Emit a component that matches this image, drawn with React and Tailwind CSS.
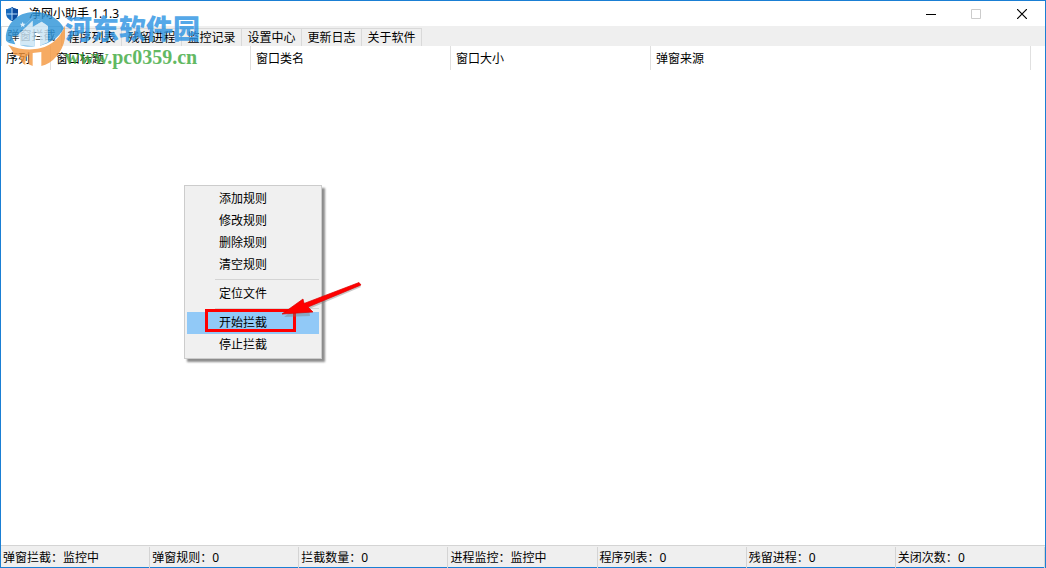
import React, { useState } from 'react';

const tabs = ['弹窗拦截', '程序列表', '残留进程', '监控记录', '设置中心', '更新日志', '关于软件'];

const menuGroups = [
  ['添加规则', '修改规则', '删除规则', '清空规则'],
  ['定位文件'],
  ['开始拦截', '停止拦截'],
];

const statusItems = [
  { label: '弹窗拦截', value: '监控中' },
  { label: '弹窗规则', value: '0' },
  { label: '拦截数量', value: '0' },
  { label: '进程监控', value: '监控中' },
  { label: '程序列表', value: '0' },
  { label: '残留进程', value: '0' },
  { label: '关闭次数', value: '0' },
];

const ShieldIcon = () => (
  <svg width="14" height="14" viewBox="0 0 14 14" aria-hidden="true">
    <path d="M7 0C5 1.5 3 2 1 2v4c0 4 2.500 6.500 6 8 3.500-1.500 6-4 6-8V2c-2 0-4-.5-6-2z" fill="#1769bd" />
    <path d="M7 0c2 1.500 4 2 6 2v4c0 4-2.500 6.500-6 8z" fill="#0b4a9e" />
    <path d="M7 1v12M1.500 7h11" stroke="#b9dcf7" />
  </svg>
);

const SiteLogo = () => (
  <svg width="60" height="56" viewBox="15 34 180 168" aria-hidden="true">
    {/* Blue upper half with the house roof cut out of it */}
    <path
      d="M18 122C14 80 48 38 100 37C142 35 178 57 192 86C176 116 150 130 120 138V104L104 96V140C84 142 74 140 62 137V110H50L98 63V82L125 66L144 79V126L166 112C150 80 130 60 98 54L36 112L46 134C30 132 20 128 18 122Z"
      fill="#2b93d8"
    />
    <path d="M98 54C130 60 156 76 166 112L144 126V79L125 66L98 82V63L50 110H36Z" fill="#2b93d8" />
    <path d="M50 110L98 63V82L125 66L144 79V128L120 138V104L104 96V140L62 137V110Z" fill="#fff" opacity=".75" />
    {/* Orange lower half */}
    <path
      d="M24 135C60 152 96 151 120 146C158 136 182 112 195 78C205 138 166 190 124 199V157L98 160V199L86 194V164L76 176V196C66 192 64 184 60 170L38 164C42 160 36 150 24 135Z"
      fill="#f5973d"
    />
    <path d="M68 66l2.500 6 6 .5-4.500 4 1.500 6-5.500-3.500-5.500 3.500 1.500-6-4.500-4 6-.5z" fill="#d5ebfa" />
  </svg>
);

const Watermark = () => (
  <div className="pointer-events-none absolute left-1 top-2.5 z-10 flex items-start opacity-80">
    <SiteLogo />
    <div className="pt-0.5 whitespace-nowrap">
      <p className="text-[27px] leading-8 font-black text-[#2b93e3]">河东软件园</p>
      <p className="font-['Liberation_Serif',serif] text-[20px] leading-6 font-bold text-[#3ca83c]">
        www.pc0359.cn
      </p>
    </div>
  </div>
);

const TitleBar = () => (
  <header className="flex h-[25px] shrink-0 items-center justify-between bg-white pl-1">
    <div className="flex items-center gap-2.5">
      <ShieldIcon />
      <h1>净网小助手 1.1.3</h1>
    </div>
    <div className="flex">
      <button aria-label="最小化" className="flex h-6 w-[45px] items-center justify-center">
        <svg width="10" height="10" viewBox="0 0 10 10" shapeRendering="crispEdges">
          <path d="M0 5.500h10" stroke="#000" />
        </svg>
      </button>
      <button aria-label="最大化" disabled className="flex h-6 w-[45px] items-center justify-center">
        <svg width="10" height="10" viewBox="0 0 10 10">
          <path d="M.5.5h9v9h-9z" fill="none" stroke="#ccc" />
        </svg>
      </button>
      <button aria-label="关闭" className="flex h-6 w-[47px] items-center justify-center">
        <svg width="10" height="10" viewBox="0 0 10 10">
          <path d="M0 0l10 10M10 0L0 10" stroke="#000" strokeWidth="1.200" />
        </svg>
      </button>
    </div>
  </header>
);

const ContextMenu = ({ active, onSelect }) => (
  <div
    role="menu"
    className="absolute left-[183px] top-[184px] w-[138px] border border-[#ccc] bg-[#f0f0f0] p-0.5 shadow-[3px_3px_2px_rgba(0,0,0,0.45)]"
  >
    {menuGroups.map((group, index) => (
      <div key={group[0]}>
        {index > 0 && (
          <div className="ml-7 flex h-[7px] items-center">
            <div className="h-px w-full bg-[#d4d4d4]" />
          </div>
        )}
        {group.map((item) => (
          <button
            key={item}
            role="menuitem"
            onClick={() => onSelect(item)}
            className={`block h-[22px] w-full pl-8 text-left ${active === item ? 'bg-[#91c9f7]' : ''}`}
          >
            {item}
          </button>
        ))}
      </div>
    ))}
    {/* Highlight box and arrow over the start item */}
    <svg
      className="pointer-events-none absolute left-5 top-[94px]"
      width="164"
      height="60"
      viewBox="0 0 164 60"
      aria-hidden="true"
    >
      <path d="M1.500 30.500h88v20h-88z" fill="none" stroke="#f00" strokeWidth="3" />
      <path d="M156 7L104 29L105 36L79 37L99 22L102 26L154 5Z" fill="#777" opacity=".4" />
      <path d="M154 2.500L156 5L103 27L108 32L77 34L98 19L99 23.500Z" fill="#f00" stroke="#d00" strokeWidth=".7" />
    </svg>
  </div>
);

const App = () => {
  const [activeTab, setActiveTab] = useState(tabs[0]);
  const [activeItem, setActiveItem] = useState('开始拦截');

  return (
    <div className="relative flex h-screen flex-col border border-[#1a7fd4] bg-white font-['Noto_Sans','Noto_Sans_CJK_SC',sans-serif] text-[12px] leading-4 text-black">
      <TitleBar />

      <nav role="tablist" className="flex h-5 shrink-0 items-end bg-[#efefef]">
        {tabs.map((tab) => (
          <button
            key={tab}
            role="tab"
            aria-selected={activeTab === tab}
            onClick={() => setActiveTab(tab)}
            className={
              activeTab === tab
                ? 'h-5 w-[61px] border border-b-0 border-[#d9d9d9] bg-white pb-0.5 text-[#333]'
                : 'h-[18px] w-15 border-t border-r border-[#d9d9d9] pt-px'
            }
          >
            {tab}
          </button>
        ))}
      </nav>

      <main className="min-h-0 flex-1 overflow-hidden pr-3.5">
        <table className="w-full table-fixed border-separate border-spacing-0">
          <thead>
            <tr className="h-6 text-left [&>th]:border-r [&>th]:border-[#e0e0e0] [&>th]:p-0 [&>th]:pt-0.5 [&>th]:pl-[5px] [&>th]:font-normal">
              <th className="w-[50px]">序列</th>
              <th className="w-[200px]">窗口标题</th>
              <th className="w-[200px]">窗口类名</th>
              <th className="w-[200px]">窗口大小</th>
              <th>弹窗来源</th>
            </tr>
          </thead>
          <tbody />
        </table>
      </main>

      <footer className="grid h-[22px] shrink-0 grid-cols-7 border-t border-[#d4d4d4] bg-[#efefef] py-px">
        {statusItems.map(({ label, value }) => (
          <div key={label} className="border-r border-[#d4d4d4] pt-px pl-0.5 leading-5 whitespace-nowrap">
            {label}：{value}
          </div>
        ))}
      </footer>

      <ContextMenu active={activeItem} onSelect={setActiveItem} />
      <Watermark />
    </div>
  );
};

export default App;
